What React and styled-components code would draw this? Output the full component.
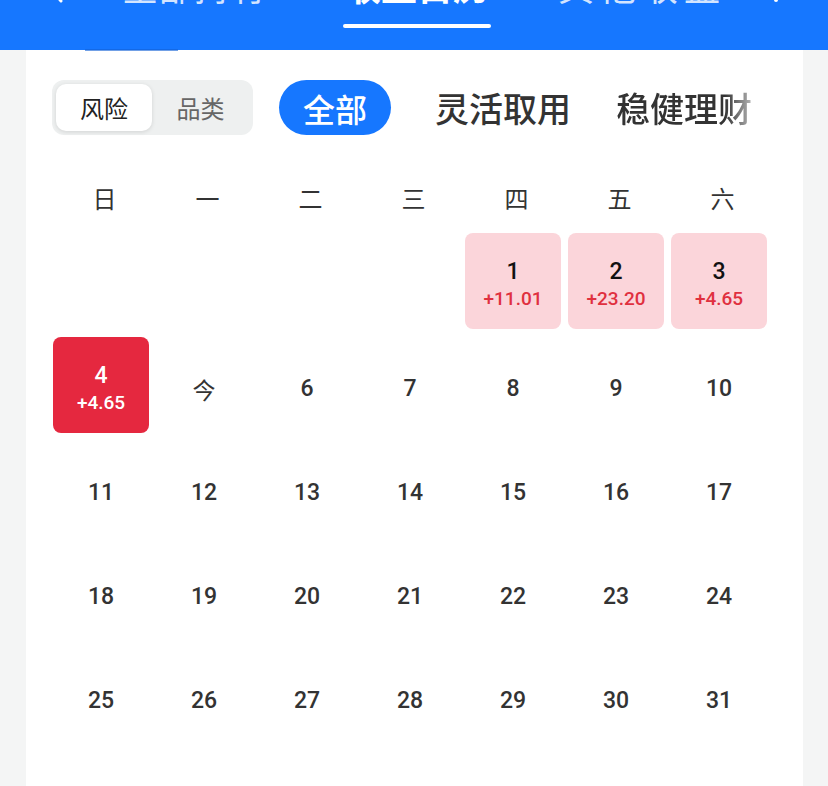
import React from "react";
import styled, { createGlobalStyle } from "styled-components";

const GlobalStyle = createGlobalStyle`
  html, body {
    margin: 0;
    padding: 0;
    background: #f4f5f5;
    font-family: "Noto Sans CJK SC", "Noto Sans", sans-serif;
  }
`;

const Page = styled.div`
  width: 828px;
  height: 786px;
  overflow: hidden;
  display: flex;
  flex-direction: column;
  background: #f4f5f5;
`;

const Header = styled.div`
  height: 50px;
  flex-shrink: 0;
  background: #1677ff;
  overflow: hidden;
`;

const HeaderRow = styled.div`
  display: flex;
  align-items: flex-start;
  margin-top: -33px;
  padding: 0 0 0 45px;
  color: #fff;
`;

const Back = styled.div`
  width: 40px;
  height: 36px;
  display: flex;
  align-items: flex-end;
`;

const TopTab = styled.div`
  display: flex;
  flex-direction: column;
  align-items: center;
  margin-left: ${(p) => p.gap}px;
  font-size: 36px;
  line-height: 36px;
  font-weight: ${(p) => (p.active ? 700 : 400)};
  color: ${(p) => (p.active ? "#fff" : "rgba(255,255,255,0.82)")};
  letter-spacing: ${(p) => p.spacing || 0}px;
  white-space: nowrap;
`;

const Underline = styled.div`
  width: 148px;
  height: 4px;
  border-radius: 2px;
  background: #fff;
  margin-top: 21px;
`;

const RightIcon = styled.div`
  margin-left: 42px;
  height: 36px;
  display: flex;
  align-items: flex-end;
`;

const Card = styled.div`
  flex: 1;
  margin: 0 25px 0 26px;
  background: #fff;
  padding: 30px 0 0 27px;
  position: relative;
  &::before {
    content: "";
    position: absolute;
    top: -1px;
    left: 59px;
    width: 93px;
    height: 2px;
    background: #1260d6;
    opacity: 0.6;
  }
`;

const FilterRow = styled.div`
  display: flex;
  align-items: center;
  height: 55px;
  margin-left: -1px;
`;

const Segment = styled.div`
  display: flex;
  width: 201px;
  height: 55px;
  box-sizing: border-box;
  padding: 4px;
  border-radius: 12px;
  background: #eef0f0;
  flex-shrink: 0;
`;

const SegItem = styled.div`
  flex: ${(p) => (p.active ? "0 0 96px" : 1)};
  display: flex;
  align-items: center;
  justify-content: center;
  border-radius: 10px;
  font-size: 24px;
  color: ${(p) => (p.active ? "#222" : "#666")};
  background: ${(p) => (p.active ? "#fff" : "transparent")};
  box-shadow: ${(p) => (p.active ? "0 1px 4px rgba(0,0,0,0.12)" : "none")};
`;

const Chip = styled.div`
  flex-shrink: 0;
  margin-left: ${(p) => p.gap}px;
  height: 55px;
  display: flex;
  align-items: center;
  justify-content: center;
  white-space: nowrap;
  font-size: ${(p) => (p.active ? "32px" : "34px")};
  font-weight: 500;
  color: ${(p) => (p.active ? "#fff" : "#333")};
  background: ${(p) => (p.active ? "#1677ff" : "transparent")};
  border-radius: 28px;
  width: ${(p) => (p.active ? "112px" : "auto")};
  box-sizing: border-box;
  ${(p) =>
    p.fade &&
    `-webkit-mask-image: linear-gradient(to right, #000 80%, rgba(0,0,0,0.35));
     mask-image: linear-gradient(to right, #000 80%, rgba(0,0,0,0.35));`}
`;

const WeekRow = styled.div`
  display: grid;
  grid-template-columns: repeat(7, 103px);
  height: 60px;
  margin-top: 32px;
`;

const WeekDay = styled.div`
  display: flex;
  align-items: center;
  justify-content: center;
  font-size: 24px;
  color: #333;
`;

const DateGrid = styled.div`
  display: grid;
  grid-template-columns: repeat(7, 96px);
  grid-auto-rows: 96px;
  column-gap: 7px;
  row-gap: 8px;
  margin-top: 6px;
`;

const Cell = styled.div`
  border-radius: 8px;
  box-sizing: border-box;
  padding-top: 7px;
  display: flex;
  flex-direction: column;
  align-items: center;
  justify-content: center;
  background: ${(p) =>
    p.tone === "strong" ? "#e5283f" : p.tone === "soft" ? "#fbd5da" : "transparent"};
`;

const DayNum = styled.div`
  font-family: "Roboto", "Noto Sans CJK SC", sans-serif;
  font-size: 23px;
  line-height: 26px;
  font-weight: 500;
  color: ${(p) => (p.tone === "strong" ? "#fff" : p.tone === "soft" ? "#111" : "#333")};
`;

const Gain = styled.div`
  font-family: "Roboto", sans-serif;
  font-size: 19px;
  line-height: 22px;
  font-weight: 500;
  margin-top: 3px;
  color: ${(p) => (p.tone === "strong" ? "#fff" : "#e0303f")};
`;

const TodayLabel = styled.div`
  font-size: 23px;
  line-height: 26px;
  color: #333;
`;

const weekDays = ["日", "一", "二", "三", "四", "五", "六"];

const gains = {
  1: { value: "+11.01", tone: "soft" },
  2: { value: "+23.20", tone: "soft" },
  3: { value: "+4.65", tone: "soft" },
  4: { value: "+4.65", tone: "strong" },
};

const TODAY = 5;
const LEAD = 4; // month starts on Thursday

export default function App() {
  const cells = [];
  for (let i = 0; i < LEAD; i++) cells.push(<Cell key={"e" + i} />);
  for (let d = 1; d <= 31; d++) {
    const g = gains[d];
    cells.push(
      <Cell key={d} tone={g && g.tone}>
        {d === TODAY ? (
          <TodayLabel>今</TodayLabel>
        ) : (
          <DayNum tone={g && g.tone}>{d}</DayNum>
        )}
        {g && <Gain tone={g.tone}>{g.value}</Gain>}
      </Cell>
    );
  }

  return (
    <Page>
      <GlobalStyle />
      <Header>
        <HeaderRow>
          <Back>
            <svg width="20" height="30" viewBox="0 0 20 30">
              <path d="M16 2 L5 15 L16 28" fill="none" stroke="#fff" strokeWidth="3" strokeLinecap="round" strokeLinejoin="round" />
            </svg>
          </Back>
          <TopTab gap={37}>全部持有</TopTab>
          <TopTab gap={77} active>
            收益日历
            <Underline />
          </TopTab>
          <TopTab gap={67} spacing={6}>其他收益</TopTab>
          <RightIcon>
            <svg width="16" height="30" viewBox="0 0 16 30">
              <path d="M3 4 C3 -2 13 -2 13 4 C13 9 8 10 8 15 L8 20" fill="none" stroke="#fff" strokeWidth="3" strokeLinecap="round" />
              <circle cx="8" cy="27" r="2" fill="#fff" />
            </svg>
          </RightIcon>
        </HeaderRow>
      </Header>
      <Card>
        <FilterRow>
          <Segment>
            <SegItem active>风险</SegItem>
            <SegItem>品类</SegItem>
          </Segment>
          <Chip active gap={26}>全部</Chip>
          <Chip gap={44}>灵活取用</Chip>
          <Chip gap={45} fade>稳健理财</Chip>
        </FilterRow>
        <WeekRow>
          {weekDays.map((w) => (
            <WeekDay key={w}>{w}</WeekDay>
          ))}
        </WeekRow>
        <DateGrid>{cells}</DateGrid>
      </Card>
    </Page>
  );
}
